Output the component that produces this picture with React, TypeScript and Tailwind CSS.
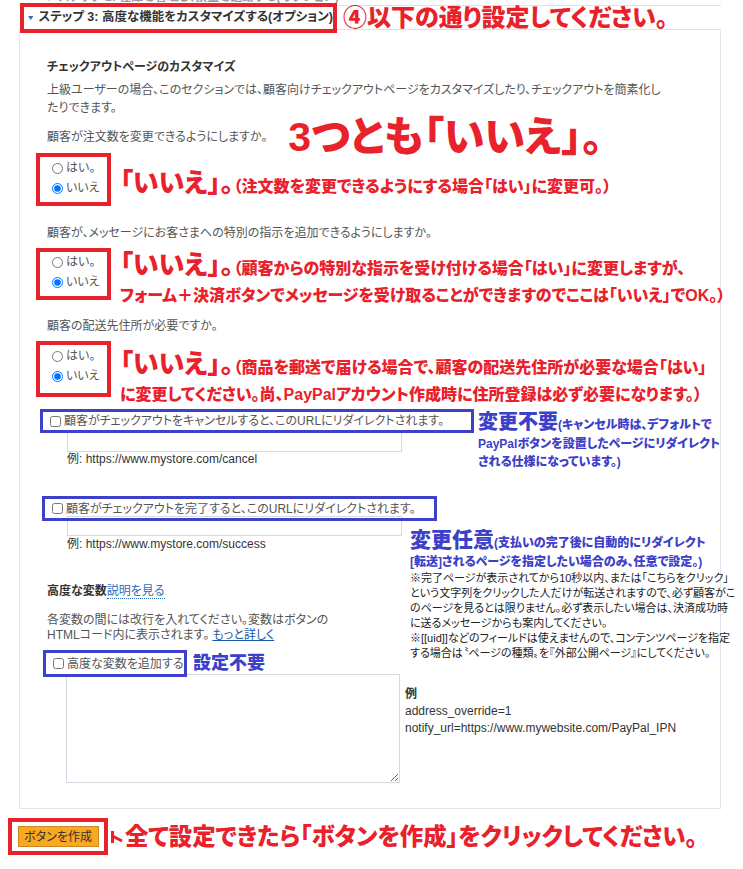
import React from "react";

// annotated screenshot of the PayPal button wizard, step 3
const RED = "text-[#e8212b]";
const BLUE = "text-[#3d40c8]";

function RadioBox({ name, className }: { name: string; className: string }) {
  return (
    <div className={`shrink-0 w-[75px] border-[4px] border-[#e8212b] pl-[12px] ${className}`}>
      <label className="flex items-center h-[20px] gap-[3px]">
        <input type="radio" name={name} className="m-0 w-[11px] h-[11px]" />
        <span>はい。</span>
      </label>
      <label className="flex items-center h-[20px] gap-[3px]">
        <input type="radio" name={name} defaultChecked className="m-0 w-[11px] h-[11px]" />
        <span>いいえ</span>
      </label>
    </div>
  );
}

export default function App() {
  return (
    <div className="w-[743px] h-[869px] overflow-hidden bg-white text-[12px] text-[#555] font-['Liberation_Sans','Noto_Sans_CJK_JP',sans-serif] [font-feature-settings:'palt']">
      <div className="ml-[19px] w-[702px]">
        {/* previous step, cut off at the top */}
        <div className="h-[5px] overflow-hidden">
          <div className="-mt-[10px] pl-[24px] leading-[14px] font-bold text-[#9a9a9a] whitespace-nowrap">
            ▼ ステップ 2: 在庫を管理し、損益を追跡する(オプション)
          </div>
        </div>

        {/* step header */}
        <div className="flex items-center h-[25px] border-y border-[#dfe2e6]">
          <div className="ml-[1px] shrink-0 flex items-center h-[30px] w-[317px] border-[4px] border-[#e8212b] pl-[4px] gap-[5px]">
            <svg width="10" height="8" viewBox="0 0 10 8">
              <polygon points="0,0.5 10,0.5 5,7.5" fill="#3b6ea5" />
            </svg>
            <span className="text-[12.5px] font-bold text-[#333] whitespace-nowrap">
              ステップ 3: 高度な機能をカスタマイズする(オプション)
            </span>
          </div>
          <span className={`ml-[6px] text-[24px] leading-[24px] font-black whitespace-nowrap ${RED}`}>
            ④以下の通り設定してください。
          </span>
        </div>

        {/* body */}
        <div className="h-[779px] border-x border-b border-[#e2e5e9] pl-[16px] pt-[28px]">
          <div className="pl-[11px] leading-[18px] font-bold text-[#333]">チェックアウトページのカスタマイズ</div>
          <p className="mt-[5px] pl-[11px] leading-[18px] whitespace-nowrap">
            上級ユーザーの場合、このセクションでは、顧客向けチェックアウトページをカスタマイズしたり、チェックアウトを簡素化し
            <br />
            たりできます。
          </p>

          <div className="mt-[11px] pl-[11px] flex items-center h-[18px] whitespace-nowrap">
            <span>顧客が注文数を変更できるようにしますか。</span>
            <span className={`ml-[21px] text-[41px] leading-[18px] font-black ${RED}`}>3つとも「いいえ」。</span>
          </div>
          <div className="mt-[7px] h-[53px] flex items-start">
            <RadioBox name="qty" className="h-[53px] pt-[1px]" />
            <div className={`ml-[9px] mt-[17px] leading-[26px] font-black whitespace-nowrap ${RED}`}>
              <span className="text-[26px]">「いいえ」。</span>
              <span className="text-[16px]">（注文数を変更できるようにする場合「はい」に変更可。）</span>
            </div>
          </div>

          <div className="mt-[18px] pl-[11px] leading-[18px]">
            顧客が、メッセージにお客さまへの特別の指示を追加できるようにしますか。
          </div>
          <div className="mt-[6px] h-[52px] flex items-start">
            <RadioBox name="msg" className="h-[52px]" />
            <div className={`ml-[9px] mt-[5px] leading-[25px] font-black whitespace-nowrap ${RED}`}>
              <span className="text-[26px]">「いいえ」。</span>
              <span className="text-[16px]">（顧客からの特別な指示を受け付ける場合「はい」に変更しますが、</span>
              <br />
              <span className="text-[16px]">フォーム＋決済ボタンでメッセージを受け取ることができますのでここは「いいえ」でOK。）</span>
            </div>
          </div>

          <div className="mt-[17px] pl-[11px] leading-[18px]">顧客の配送先住所が必要ですか。</div>
          <div className="mt-[6px] h-[56px] flex items-start">
            <RadioBox name="ship" className="h-[56px] pt-[1px]" />
            <div className={`ml-[9px] mt-[11px] leading-[25px] font-black whitespace-nowrap ${RED}`}>
              <span className="text-[26px]">「いいえ」。</span>
              <span className="text-[16px]">（商品を郵送で届ける場合で、顧客の配送先住所が必要な場合「はい」</span>
              <br />
              <span className="text-[16px]">に変更してください。尚、PayPalアカウント作成時に住所登録は必ず必要になります。）</span>
            </div>
          </div>

          {/* cancel url */}
          <div className="mt-[12px] flex items-start">
            <div className="shrink-0">
              <label className="relative z-10 ml-[4px] flex items-center h-[24px] w-[434px] border-[3px] border-[#3d40c8] pl-[7px] gap-[3px] whitespace-nowrap">
                <input type="checkbox" className="m-0 w-[11px] h-[11px]" />
                <span>顧客がチェックアウトをキャンセルすると、このURLにリダイレクトされます。</span>
              </label>
              <input type="text" className="block -mt-[1px] ml-[31px] w-[335px] h-[20px] border border-[#d3dae2] bg-white" />
              <div className="ml-[31px] leading-[14px] text-[#333]">例: https://www.mystore.com/cancel</div>
            </div>
            <div className={`ml-[4px] mt-[3px] font-black whitespace-nowrap ${BLUE}`}>
              <div className="leading-[20px]">
                <span className="text-[20px]">変更不要</span>
                <span className="text-[12px]">(キャンセル時は、デフォルトで</span>
              </div>
              <div className="text-[12px] leading-[18px]">PayPalボタンを設置したページにリダイレクト</div>
              <div className="text-[12px] leading-[18px]">される仕様になっています。)</div>
            </div>
          </div>

          {/* success url + advanced variables */}
          <div className="mt-[25px] flex items-start">
            <div className="shrink-0 w-[369px]">
              <label className="relative z-10 ml-[6px] flex items-center h-[25px] w-[395px] border-[3px] border-[#3d40c8] pl-[7px] gap-[3px] whitespace-nowrap">
                <input type="checkbox" className="m-0 w-[11px] h-[11px]" />
                <span>顧客がチェックアウトを完了すると、このURLにリダイレクトされます。</span>
              </label>
              <input type="text" className="block -mt-[5px] ml-[31px] w-[335px] h-[20px] border border-[#d3dae2] bg-white" />
              <div className="ml-[31px] leading-[16px] text-[#333]">例: https://www.mystore.com/success</div>

              <div className="mt-[30px] pl-[11px] leading-[18px]">
                <span className="font-bold text-[#333]">高度な変数</span>
                <a className="text-[#2a6ebb] border-b border-dotted border-[#2a6ebb]">説明を見る</a>
              </div>
              <p className="mt-[13px] pl-[11px] leading-[15px] whitespace-nowrap">
                各変数の間には改行を入れてください。変数はボタンの
                <br />
                HTMLコード内に表示されます。<a className="ml-[3px] text-[#1a5aa6] underline">もっと詳しく</a>
              </p>
              <div className="mt-[7px] flex items-center">
                <label className="relative z-10 ml-[7px] flex items-center h-[27px] w-[144px] border-[3px] border-[#3d40c8] pl-[7px] gap-[3px] whitespace-nowrap">
                  <input type="checkbox" className="m-0 w-[11px] h-[11px]" />
                  <span>高度な変数を追加する</span>
                </label>
                <span className={`ml-[6px] text-[18px] font-black ${BLUE}`}>設定不要</span>
              </div>
              <textarea className="block -mt-[3px] ml-[30px] w-[334px] h-[109px] border border-[#d3dae2] bg-white resize" />
            </div>

            <div className="whitespace-nowrap">
              <div className={`mt-[34px] ml-[5px] font-black ${BLUE}`}>
                <div className="leading-[20px]">
                  <span className="text-[21px]">変更任意</span>
                  <span className="text-[12px]">(支払いの完了後に自動的にリダイレクト</span>
                </div>
                <div className="text-[12px] leading-[18px]">[転送]されるページを指定したい場合のみ、任意で設定。)</div>
              </div>
              <div className="ml-[5px] text-[11px] leading-[15px] text-[#222]">
                <div>※完了ページが表示されてから10秒以内、または「こちらをクリック」</div>
                <div>という文字列をクリックした人だけが転送されますので、必ず顧客がこ</div>
                <div>のページを見るとは限りません。必ず表示したい場合は、決済成功時</div>
                <div>に送るメッセージからも案内してください。</div>
                <div>※[[uid]]などのフィールドは使えませんので、コンテンツページを指定</div>
                <div>する場合は〝ページの種類〟を『外部公開ページ』にしてください。</div>
              </div>
              <div className="mt-[25px] leading-[17px] text-[#333]">
                <div className="font-bold">例</div>
                <div>address_override=1</div>
                <div>notify_url=https://www.mywebsite.com/PayPal_IPN</div>
              </div>
            </div>
          </div>
        </div>
      </div>

      {/* create button */}
      <div className="mt-[9px] ml-[8px] flex items-center">
        <div className="flex items-center justify-center w-[100px] h-[37px] border-[4px] border-[#e8212b]">
          <button className="w-[81px] h-[21px] bg-[#fba722] border border-[#c88a20] text-[12px] text-[#333]">
            ボタンを作成
          </button>
        </div>
        <svg width="14" height="14" viewBox="0 0 14 14" className="ml-[2px]">
          <path d="M2.5 1 V13 M2.5 6 L12 11" stroke="#e8212b" strokeWidth="3" fill="none" />
        </svg>
        <span className={`ml-[1px] text-[23.4px] leading-[28px] font-black whitespace-nowrap ${RED}`}>
          全て設定できたら「ボタンを作成」をクリックしてください。
        </span>
      </div>
    </div>
  );
}
